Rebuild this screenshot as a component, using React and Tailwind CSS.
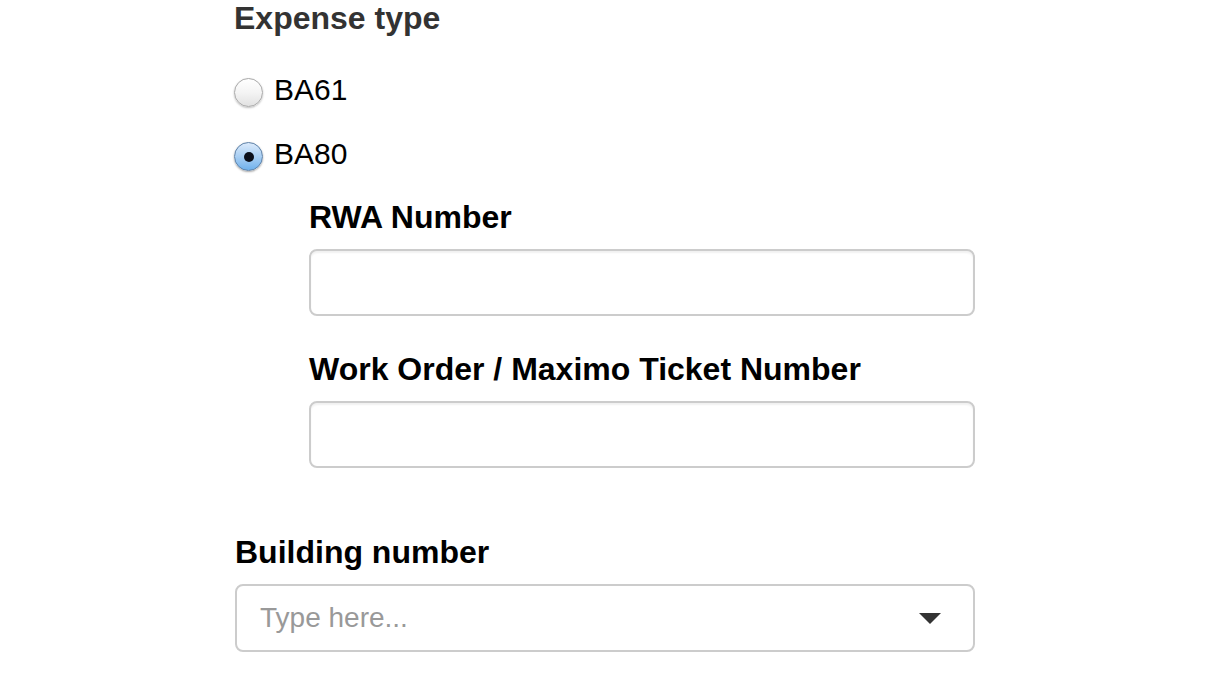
import React, { useState } from 'react';

const labelCls = "block text-[32px] leading-[36px] font-bold text-black";

const Radio = ({ checked, label, onClick }) => (
  <div className="flex items-start h-[36px] cursor-pointer" onClick={onClick}>
    <span
      className={
        checked
          ? "mt-[6px] w-[29px] h-[29px] rounded-full border border-[#5b7fa6] bg-gradient-to-b from-[#dbeafb] via-[#a9cff3] to-[#6fb1ec] shadow-[0_1px_2px_rgba(0,0,0,0.35)] flex items-center justify-center"
          : "mt-[6px] w-[29px] h-[29px] rounded-full border border-[#a8a8a8] bg-gradient-to-b from-white via-[#f4f4f4] to-[#e2e2e2] shadow-[0_1px_2px_rgba(0,0,0,0.25)] flex items-center justify-center"
      }
    >
      {checked && <span className="w-[10px] h-[10px] rounded-full bg-[#0b0f1a]" />}
    </span>
    <span className="ml-[11px] text-[30px] leading-[36px] text-black">{label}</span>
  </div>
);

export default function App() {
  const [type, setType] = useState('BA80');

  return (
    <div className="w-[1227px] h-[681px] bg-white overflow-hidden" style={{ fontFamily: '"Liberation Sans", Arial, sans-serif' }}>
      <div className="ml-[234px] w-[741px]">
        <h2 className="text-[32px] leading-[36px] font-bold text-[#333]">Expense type</h2>

        <div className="mt-[36px] flex flex-col gap-[28px]">
          <Radio label="BA61" checked={type === 'BA61'} onClick={() => setType('BA61')} />
          <Radio label="BA80" checked={type === 'BA80'} onClick={() => setType('BA80')} />
        </div>

        {/* Campos BA80 */}
        <div className="ml-[75px] w-[666px]">
          <label className={labelCls + " mt-[27px]"}>RWA Number</label>
          <input
            type="text"
            className="mt-[14px] block w-full h-[67px] rounded-[8px] border-2 border-[#cccccc] shadow-[inset_0_2px_2px_rgba(0,0,0,0.06)] px-[22px] text-[28px] outline-none"
          />

          <label className={labelCls + " mt-[35px]"}>Work Order / Maximo Ticket Number</label>
          <input
            type="text"
            className="mt-[14px] block w-full h-[67px] rounded-[8px] border-2 border-[#cccccc] shadow-[inset_0_2px_2px_rgba(0,0,0,0.06)] px-[22px] text-[28px] outline-none"
          />
        </div>

        <label className={labelCls + " mt-[66px] ml-[1px]"}>Building number</label>
        <div className="mt-[14px] ml-[1px] w-[740px] h-[68px] rounded-[8px] border-2 border-[#cccccc] flex items-center justify-between pl-[23px] pr-[32px]">
          <span className="text-[28px] text-[#999999]">Type here...</span>
          <svg width="22" height="12" viewBox="0 0 22 12" className="mt-[1px]">
            <polygon points="0,0 22,0 11,11" fill="#333333" />
          </svg>
        </div>
      </div>
    </div>
  );
}
